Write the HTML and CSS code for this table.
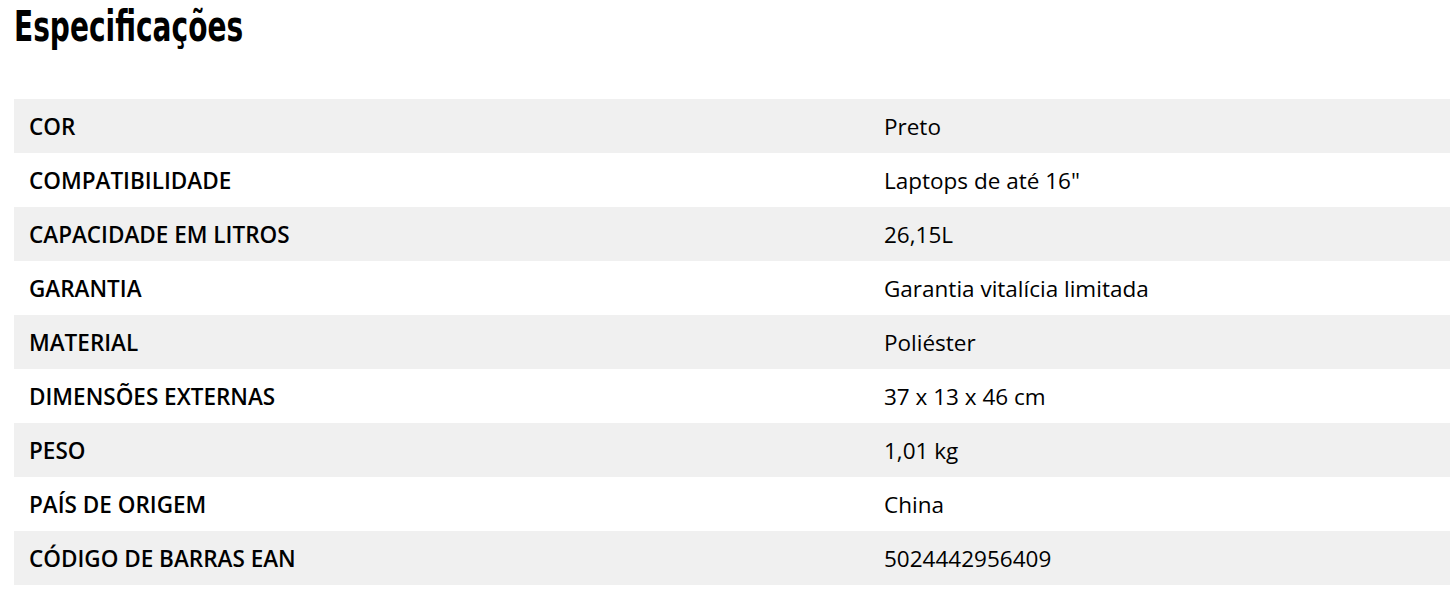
FILE: index.html
```html
<!DOCTYPE html>
<html lang="pt">
<head>
<meta charset="utf-8">
<title>Especificações</title>
<link rel="stylesheet" href="styles.css">
</head>
<body>
<section class="specs">
  <h2 class="specs-title"><span class="title-text">Especificações</span></h2>
  <div class="specs-table">
    <div class="row"><div class="label">COR</div><div class="value">Preto</div></div>
    <div class="row"><div class="label">COMPATIBILIDADE</div><div class="value">Laptops de até 16"</div></div>
    <div class="row"><div class="label">CAPACIDADE EM LITROS</div><div class="value">26,15L</div></div>
    <div class="row"><div class="label">GARANTIA</div><div class="value">Garantia vitalícia limitada</div></div>
    <div class="row"><div class="label">MATERIAL</div><div class="value">Poliéster</div></div>
    <div class="row"><div class="label">DIMENSÕES EXTERNAS</div><div class="value">37 x 13 x 46 cm</div></div>
    <div class="row"><div class="label">PESO</div><div class="value">1,01 kg</div></div>
    <div class="row"><div class="label">PAÍS DE ORIGEM</div><div class="value">China</div></div>
    <div class="row"><div class="label">CÓDIGO DE BARRAS EAN</div><div class="value">5024442956409</div></div>
  </div>
</section>
</body>
</html>
```

FILE: styles.css
```css
html, body {
  margin: 0;
  padding: 0;
  background: #fff;
}
body {
  font-family: "Open Sans", "Liberation Sans", sans-serif;
  color: #000;
}
.specs {
  padding: 0 0 0 14px;
}
.specs-title {
  margin: 0;
  height: 99px;
  box-sizing: border-box;
  padding-top: 1px;
  font-family: "DejaVu Sans Condensed", "DejaVu Sans", sans-serif;
  font-stretch: condensed;
  font-weight: 700;
  font-size: 43px;
  line-height: 50px;
  color: #000;
}
.title-text {
  display: inline-block;
  transform: scaleX(0.725);
  transform-origin: left center;
}
.specs-table {
  display: flex;
  flex-direction: column;
}
.row {
  display: grid;
  grid-template-columns: 855px 1fr;
  height: 54px;
  align-items: center;
  font-size: 22.5px;
}
.row:nth-child(odd) {
  background: #f0f0f0;
}
.label {
  padding-left: 15px;
  font-weight: 600;
}
.value {
  padding-left: 15px;
  font-weight: 400;
}
```
